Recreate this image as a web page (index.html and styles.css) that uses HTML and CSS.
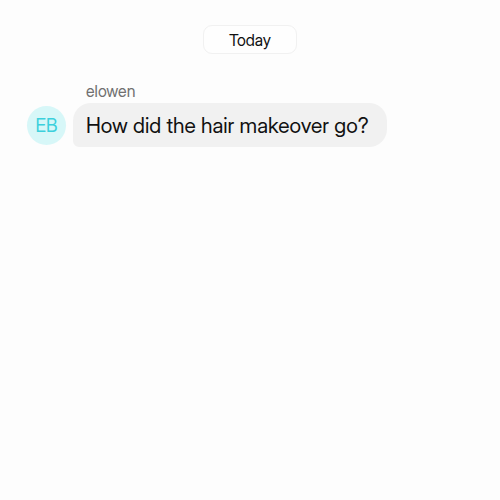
FILE: index.html
```html
<!DOCTYPE html>
<html lang="en">

<head>
    <meta charset="UTF-8">
    <meta name="viewport" content="width=device-width, initial-scale=1.0">
    <title>Chat</title>
    <link rel="stylesheet" href="styles.css">
</head>

<body>
    <main class="chat">
        <div class="day">Today</div>
        <div class="message">
            <div class="avatar">EB</div>
            <div class="content">
                <div class="name">elowen</div>
                <p class="bubble">How did the hair makeover go?</p>
            </div>
        </div>
    </main>
</body>

</html>
```

FILE: styles.css
```css
* {
    margin: 0;
    padding: 0;
    box-sizing: border-box;
}

body {
    background-color: #fdfdfd;
    color: #111;
    font-family: "Inter Display", Inter, "Liberation Sans", sans-serif;
}

.chat {
    display: flex;
    flex-direction: column;
    gap: 27px;
    padding: 25px 27px;
}

.day {
    align-self: center;
    padding: 1px 25px 0;
    border: 1px solid #f1f1f1;
    border-radius: 9px;
    background-color: #fefefe;
    font-size: 16px;
    line-height: 26px;
}

.message {
    display: flex;
    align-items: flex-end;
    gap: 7px;
}

.avatar {
    width: 39px;
    height: 39px;
    margin-bottom: 2px;
    border-radius: 50%;
    background-color: #d7f7f8;
    color: #3cd0dc;
    font-size: 18px;
    line-height: 39px;
    text-align: center;
}

.name {
    padding: 0 0 2px 13px;
    color: #707070;
    font-size: 16px;
    line-height: 20px;
}

.bubble {
    padding: 1px 18px 0 13px;
    border-radius: 18px 18px 18px 6px;
    background-color: #f1f1f1;
    font-size: 21px;
    line-height: 43px;
}
```
